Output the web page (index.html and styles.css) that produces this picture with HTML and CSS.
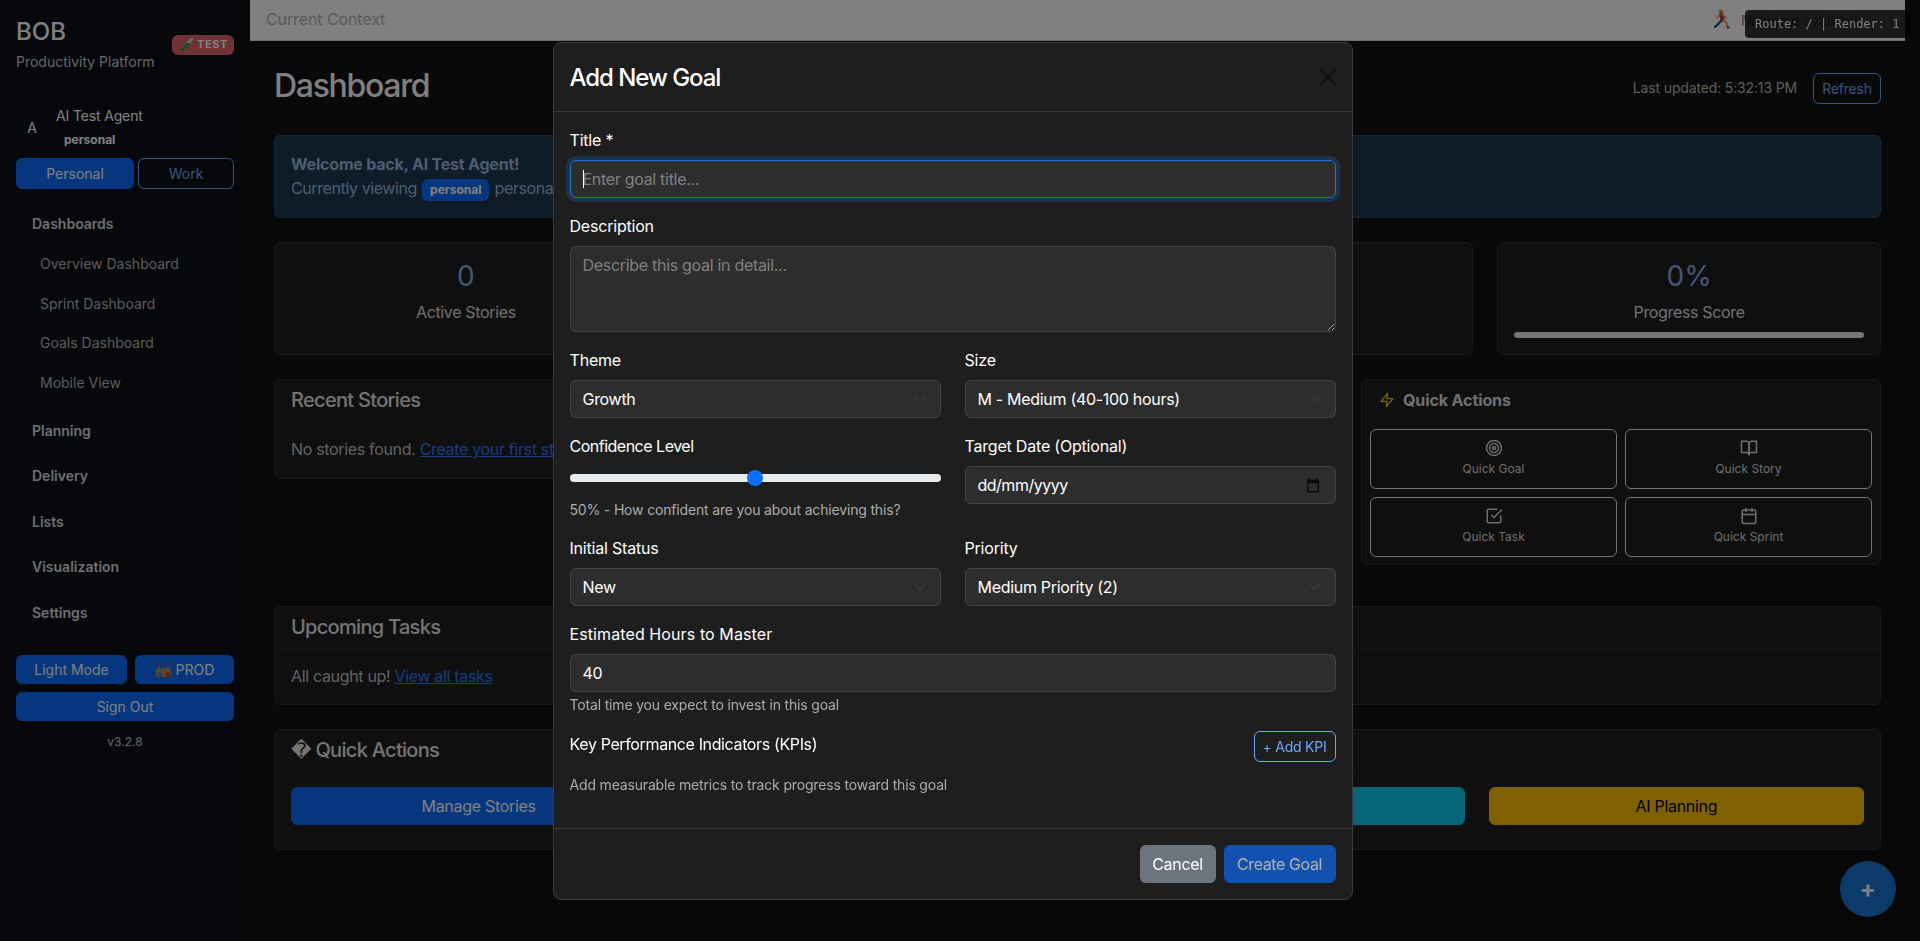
FILE: index.html
```html
<!DOCTYPE html>
<html lang="en">
<head>
<meta charset="utf-8">
<title>BOB - Productivity Platform</title>
<link rel="stylesheet" href="styles.css">
</head>
<body>
<div class="app">
  <aside class="sidebar">
    <div class="brand-row">
      <div class="brand">
        <h1 class="brand-name">BOB</h1>
        <div class="brand-sub">Productivity Platform</div>
      </div>
      <span class="test-badge">
        <svg class="emoji-tube" viewBox="0 0 14 14" aria-hidden="true"><path d="M11.5 1.2 2.4 11.4" stroke="#cfd8d8" stroke-width="3" stroke-linecap="round"/><path d="M8 6 2.4 11.6" stroke="#1f9a3a" stroke-width="3" stroke-linecap="round"/></svg>
        TEST
      </span>
    </div>
    <div class="user">
      <div class="avatar">A</div>
      <div class="user-info">
        <div class="user-name">AI Test Agent</div>
        <div class="user-tag">personal</div>
      </div>
    </div>
    <div class="persona-switch">
      <button class="btn btn-primary btn-persona">Personal</button>
      <button class="btn btn-outline btn-work">Work</button>
    </div>
    <nav class="nav">
      <div class="nav-group nav-group-open">Dashboards</div>
      <a class="nav-item">Overview Dashboard</a>
      <a class="nav-item">Sprint Dashboard</a>
      <a class="nav-item">Goals Dashboard</a>
      <a class="nav-item nav-item-last">Mobile View</a>
      <div class="nav-group">Planning</div>
      <div class="nav-group">Delivery</div>
      <div class="nav-group">Lists</div>
      <div class="nav-group">Visualization</div>
      <div class="nav-group">Settings</div>
    </nav>
    <div class="side-foot">
      <div class="side-foot-row">
        <button class="btn btn-primary btn-side btn-light-mode">Light Mode</button>
        <button class="btn btn-primary btn-side btn-prod">
          <svg class="emoji-factory" viewBox="0 0 18 18" aria-hidden="true"><rect x="3.5" y="1" width="1.6" height="5" fill="#c9485b"/><rect x="8.2" y="1" width="1.6" height="5" fill="#c9485b"/><rect x="12.9" y="1" width="1.6" height="5" fill="#c9485b"/><path d="M1 17V9l4-3 1 3 3-3 1 3 3-3 4 3v8z" fill="#b08d68"/><rect x="3" y="12" width="4" height="5" fill="#6d7a88"/><rect x="12" y="12" width="4" height="5" fill="#d92a2a"/></svg>
          PROD
        </button>
      </div>
      <button class="btn btn-primary btn-side btn-signout">Sign Out</button>
      <div class="version">v3.2.8</div>
    </div>
  </aside>

  <div class="main">
    <header class="topbar">
      <span class="topbar-title">Current Context</span>
      <div class="topbar-right">
        <svg class="emoji-runner" viewBox="0 0 16 20" aria-hidden="true"><circle cx="7" cy="2.6" r="2.2" fill="#d99a3c"/><path d="M7 5.4l1.6 5" stroke="#c2304f" stroke-width="4" stroke-linecap="round"/><path d="M6.3 5.4 3 8.5M8.5 5.6l3.6 3.4" stroke="#d99a3c" stroke-width="1.5" stroke-linecap="round"/><path d="M8 11l-3 3.3L1.5 17.5" stroke="#2a3c9c" stroke-width="2.2" fill="none" stroke-linecap="round"/><path d="M9 11l3.4 2.5.8 4" stroke="#d99a3c" stroke-width="1.7" fill="none" stroke-linecap="round"/><path d="M.4 18.5 2 17.4M13 18.6l2.2-.2" stroke="#222" stroke-width="1.6"/></svg>
        <span class="topbar-note">Navigate available</span>
      </div>
    </header>

    <main class="content">
      <div class="page-head">
        <h2 class="page-title">Dashboard</h2>
        <div class="page-actions">
          <span class="updated">Last updated: 5:32:13 PM</span>
          <button class="btn btn-outline btn-refresh">Refresh</button>
        </div>
      </div>

      <div class="welcome">
        <div class="welcome-title">Welcome back, AI Test Agent!</div>
        <div class="welcome-text">Currently viewing <span class="welcome-badge">personal</span> personal workspace.</div>
      </div>

      <div class="stats">
        <div class="card stat"><div class="stat-value">0</div><div class="stat-label">Active Stories</div></div>
        <div class="card stat"><div class="stat-value">0</div><div class="stat-label">Goals</div></div>
        <div class="card stat"><div class="stat-value">0</div><div class="stat-label">Upcoming Tasks</div></div>
        <div class="card stat"><div class="stat-value">0%</div><div class="stat-label">Progress Score</div><div class="progress"></div></div>
      </div>

      <div class="split">
        <section class="card recent">
          <h3 class="card-head">Recent Stories</h3>
          <div class="card-body">No stories found. <a class="link">Create your first story</a></div>
        </section>
        <section class="card quick">
          <h3 class="quick-head">
            <svg class="quick-bolt" viewBox="0 0 24 24" aria-hidden="true"><polygon points="13 2 3 14 12 14 11 22 21 10 12 10 13 2"/></svg>
            Quick Actions
          </h3>
          <div class="quick-grid">
            <button class="quick-btn">
              <svg class="icon" viewBox="0 0 24 24" aria-hidden="true"><circle cx="12" cy="12" r="10"/><circle cx="12" cy="12" r="6"/><circle cx="12" cy="12" r="2"/></svg>
              Quick Goal
            </button>
            <button class="quick-btn">
              <svg class="icon" viewBox="0 0 24 24" aria-hidden="true"><path d="M2 3h6a4 4 0 0 1 4 4v14a3 3 0 0 0-3-3H2z"/><path d="M22 3h-6a4 4 0 0 0-4 4v14a3 3 0 0 1 3-3h7z"/></svg>
              Quick Story
            </button>
            <button class="quick-btn">
              <svg class="icon" viewBox="0 0 24 24" aria-hidden="true"><polyline points="9 11 12 14 22 4"/><path d="M21 12v7a2 2 0 0 1-2 2H5a2 2 0 0 1-2-2V5a2 2 0 0 1 2-2h11"/></svg>
              Quick Task
            </button>
            <button class="quick-btn">
              <svg class="icon" viewBox="0 0 24 24" aria-hidden="true"><rect x="3" y="4" width="18" height="18" rx="2"/><line x1="16" y1="2" x2="16" y2="6"/><line x1="8" y1="2" x2="8" y2="6"/><line x1="3" y1="10" x2="21" y2="10"/></svg>
              Quick Sprint
            </button>
          </div>
        </section>
      </div>

      <section class="card upcoming">
        <h3 class="card-head">Upcoming Tasks</h3>
        <div class="card-body">All caught up! <a class="link">View all tasks</a></div>
      </section>

      <section class="card actions">
        <h3 class="card-head"><span class="replacement">�</span> Quick Actions</h3>
        <div class="card-body actions-grid">
          <button class="btn action btn-primary">Manage Stories</button>
          <button class="btn action btn-primary">Manage Goals</button>
          <button class="btn action btn-info">Kanban Board</button>
          <button class="btn action btn-warning">AI Planning</button>
        </div>
      </section>
    </main>
  </div>
</div>

<button class="fab">+</button>
<div class="debug">Route: / | Render: 1</div>

<div class="backdrop"></div>

<div class="modal-layer">
  <div class="modal">
    <div class="modal-head">
      <h4 class="modal-title">Add New Goal</h4>
      <svg class="modal-close" viewBox="0 0 16 16" aria-hidden="true"><path d="M1 1l14 14M15 1 1 15"/></svg>
    </div>
    <div class="modal-body">
      <div class="field">
        <label class="label">Title *</label>
        <div class="caret-wrap">
          <input class="control control-focus" type="text" placeholder="Enter goal title...">
        </div>
      </div>
      <div class="field">
        <label class="label">Description</label>
        <textarea class="control control-area" placeholder="Describe this goal in detail..."></textarea>
      </div>
      <div class="two">
        <div class="field">
          <label class="label">Theme</label>
          <select class="control control-select"><option>Growth</option></select>
        </div>
        <div class="field">
          <label class="label">Size</label>
          <select class="control control-select"><option>M - Medium (40-100 hours)</option></select>
        </div>
        <div class="field">
          <label class="label label-tight">Confidence Level</label>
          <input class="range" type="range" min="0" max="100" value="50">
          <div class="hint hint-range">50% - How confident are you about achieving this?</div>
        </div>
        <div class="field">
          <label class="label">Target Date (Optional)</label>
          <div class="control control-date">
            <span>dd/mm/yyyy</span>
            <svg class="date-icon" viewBox="0 0 14 16" aria-hidden="true"><path d="M3 1v2M11 1v2" stroke="#0c0c0c" stroke-width="1.6"/><rect x="1.7" y="3.2" width="10.6" height="11.6" rx="1" fill="none" stroke="#0c0c0c" stroke-width="1.4"/><rect x="1.7" y="3.2" width="10.6" height="3.2" fill="#0c0c0c"/></svg>
          </div>
        </div>
        <div class="field">
          <label class="label">Initial Status</label>
          <select class="control control-select"><option>New</option></select>
        </div>
        <div class="field">
          <label class="label">Priority</label>
          <select class="control control-select"><option>Medium Priority (2)</option></select>
        </div>
      </div>
      <div class="field">
        <label class="label label-hours">Estimated Hours to Master</label>
        <input class="control" type="text" value="40">
        <div class="hint hint-hours">Total time you expect to invest in this goal</div>
      </div>
      <div class="field">
        <div class="kpi-head">
          <label class="label label-kpi">Key Performance Indicators (KPIs)</label>
          <button class="btn btn-kpi">+ Add KPI</button>
        </div>
        <div class="hint hint-kpi">Add measurable metrics to track progress toward this goal</div>
      </div>
    </div>
    <div class="modal-foot">
      <button class="btn btn-cancel">Cancel</button>
      <button class="btn btn-create" disabled>Create Goal</button>
    </div>
  </div>
</div>
</body>
</html>
```

FILE: styles.css
```css
* { box-sizing: border-box; }

html, body {
  margin: 0;
  height: 100%;
  overflow: hidden;
}

body {
  background: #121212;
  color: #e0e0e0;
  font-family: Inter, "Noto Sans", "Liberation Sans", sans-serif;
  font-size: 16px;
  line-height: 1.5;
}

h1, h2, h3, h4 { margin: 0; font-weight: 500; }

.app {
  display: flex;
  width: 1905px;
  min-height: 941px;
}

/* Buttons */
.btn {
  display: inline-flex;
  align-items: center;
  justify-content: center;
  border: 1px solid transparent;
  border-radius: 6px;
  font-family: inherit;
  font-size: 14px;
  line-height: 1.5;
  padding: 4px 8px;
  color: #fff;
  background: none;
}
.btn-primary { background: #0d6efd; border-color: #0d6efd; color: #fff; }
.btn-outline { color: #6ea8fe; border-color: #6ea8fe; }
.btn-info { background: #0dcaf0; border-color: #0dcaf0; color: #000; }
.btn-warning { background: #ffc107; border-color: #ffc107; color: #000; }

/* Sidebar */
.sidebar {
  flex: 0 0 250px;
  width: 250px;
  min-height: 941px;
  background: #0d1117;
  padding: 16px;
}
.brand-row {
  display: flex;
  align-items: center;
  justify-content: space-between;
  height: 57px;
}
.brand { align-self: flex-start; padding-top: 1px; }
.brand-name {
  font-size: 24px;
  line-height: 29px;
  color: #fff;
}
.brand-sub {
  margin-top: 5px;
  font-size: 14px;
  line-height: 21px;
  color: #ccc;
}
.test-badge {
  display: inline-flex;
  align-items: center;
  gap: 3px;
  width: 62px;
  height: 20px;
  padding: 0 6px 0 8px;
  border-radius: 6px;
  background: #e0646c;
  color: #fff;
  font-size: 11px;
  font-weight: 700;
  letter-spacing: .6px;
}
.emoji-tube { width: 14px; height: 14px; flex: none; }

.user {
  display: flex;
  align-items: flex-start;
  margin-top: 32px;
}
.avatar {
  flex: 0 0 32px;
  height: 45px;
  display: flex;
  align-items: center;
  justify-content: center;
  font-size: 14px;
  color: #fff;
  margin-right: 8px;
}
.user-name {
  font-size: 14px;
  line-height: 21px;
  color: #fff;
  letter-spacing: -.15px;
}
.user-tag {
  width: fit-content;
  margin-top: 4px;
  padding: 0 8px;
  font-size: 12px;
  line-height: 20px;
  font-weight: 700;
  color: #fff;
}
.persona-switch {
  display: flex;
  gap: 4px;
  margin-top: 8px;
}
.btn-persona { flex: 0 0 118px; height: 31px; }
.btn-work { flex: 0 0 96px; height: 31px; }

.nav { margin-top: 13px; }
.nav-group {
  display: flex;
  align-items: center;
  height: 45.5px;
  padding-left: 16px;
  font-size: 14px;
  font-weight: 600;
  color: #ddd;
}
.nav-group-open { height: 42px; }
.nav-item {
  display: flex;
  align-items: center;
  height: 39.6px;
  padding-left: 24px;
  font-size: 14px;
  color: #b8b8b8;
}
.nav-item-last { margin-bottom: 5px; }

.side-foot { margin-top: 20px; }
.side-foot-row { display: flex; gap: 8px; margin-bottom: 8px; }
.btn-side { height: 29px; padding: 0 4px; }
.btn-light-mode { flex: 0 0 111px; }
.btn-prod { flex: 0 0 99px; gap: 4px; }
.btn-signout { width: 100%; }
.emoji-factory { width: 17px; height: 17px; }
.version {
  margin-top: 12px;
  font-size: 12px;
  line-height: 18px;
  text-align: center;
  color: #ccc;
}

/* Main */
.main { flex: 1; min-width: 0; }
.topbar {
  display: flex;
  align-items: center;
  justify-content: space-between;
  height: 41px;
  padding: 0 16px;
  background: #fff;
  border-bottom: 1px solid #ddd;
}
.topbar-title { color: #b5b5b5; line-height: 36px; height: 38px; letter-spacing: -.1px; }
.topbar-right { display: flex; align-items: center; gap: 11px; width: 175px; }
.emoji-runner { width: 16px; height: 20px; flex: none; margin-top: -2px; }
.topbar-note { color: #888; white-space: nowrap; font-size: 14px; }

.content { padding: 25px 24px 0; }
.page-head {
  display: flex;
  justify-content: space-between;
  align-items: flex-start;
  height: 38px;
  margin-bottom: 31px;
}
.page-title {
  font-size: 32px;
  line-height: 38px;
  padding-top: 1px;
  letter-spacing: -1.3px;
  color: #fff;
}
.page-actions {
  display: flex;
  align-items: center;
  gap: 16px;
  margin-top: 7px;
}
.updated { font-size: 14px; color: #bbb; margin-bottom: 3px; letter-spacing: -.15px; }
.btn-refresh { height: 31px; width: 68px; padding: 0; letter-spacing: -.2px; }

.welcome {
  height: 83px;
  padding: 16px;
  margin-bottom: 24px;
  background: #1c3850;
  border: 1px solid #2a4a70;
  border-radius: 6px;
  color: #9ab8e0;
}
.welcome-title { font-weight: 700; letter-spacing: -.2px; }
.welcome-text { letter-spacing: -.4px; }
.welcome-badge {
  display: inline-block;
  padding: 4px 8px;
  margin: 0 1px;
  border-radius: 6px;
  background: #0d6efd;
  color: #fff;
  font-size: 12px;
  font-weight: 700;
  line-height: 14px;
  letter-spacing: 0;
  vertical-align: baseline;
}

.card {
  background: #1e1e1e;
  border: 1px solid #333;
  border-radius: 6px;
}
.stats {
  display: grid;
  grid-template-columns: repeat(4, 1fr);
  gap: 24px;
  margin-bottom: 24px;
}
.stat {
  height: 113px;
  padding: 16px;
  text-align: center;
}
.stat-value {
  font-size: 28px;
  line-height: 34px;
  margin-bottom: 7px;
  color: #88ace8;
  font-weight: 400;
}
.stat-label { line-height: 24px; color: #e0e0e0; letter-spacing: -.35px; }
.progress {
  height: 6px;
  margin-top: 8px;
  border-radius: 6px;
  background: #e9ecef;
}

.split {
  display: grid;
  grid-template-columns: 1fr 520px;
  gap: 24px;
  align-items: start;
  margin-bottom: 41px;
}
.card-head {
  height: 42px;
  padding: 8px 16px;
  font-size: 20px;
  line-height: 24px;
  letter-spacing: -.7px;
  color: #e8e8e8;
  border-bottom: 1px solid #2b2b2b;
}
.card-body { padding: 15px 16px 17px; color: #c4c4c4; letter-spacing: -.33px; }
.link { color: #2c7bff; text-decoration: underline; }

.quick { height: 186px; padding: 0 8px 8px; }
.quick-head {
  display: flex;
  align-items: flex-start;
  gap: 8px;
  height: 49px;
  padding: 8px 0 0 9px;
  font-size: 16px;
  line-height: 24px;
  font-weight: 700;
  letter-spacing: -.1px;
  color: #e0e0e0;
}
.quick-bolt {
  width: 16px;
  height: 16px;
  margin-top: 4px;
  fill: none;
  stroke: #ffc107;
  stroke-width: 2;
  stroke-linecap: round;
  stroke-linejoin: round;
}
.quick-grid {
  display: grid;
  grid-template-columns: 1fr 1fr;
  grid-auto-rows: 60px;
  gap: 8px;
}
.quick-btn {
  display: flex;
  flex-direction: column;
  align-items: center;
  justify-content: center;
  gap: 3px;
  border: 1px solid #ededed;
  border-radius: 6px;
  background: none;
  font-family: inherit;
  font-size: 12px;
  line-height: 18px;
  color: #ddd;
  padding: 0 0 2px;
}
.icon {
  width: 18px;
  height: 18px;
  fill: none;
  stroke: #ddd;
  stroke-width: 2;
  stroke-linecap: round;
  stroke-linejoin: round;
}

.upcoming { height: 99px; margin-bottom: 24px; }
.actions { height: 121px; }
.replacement { font-family: "DejaVu Sans", sans-serif; }
.actions-grid {
  display: grid;
  grid-template-columns: repeat(4, 1fr);
  gap: 24px;
}
.action { height: 38px; font-size: 16px; padding: 0; letter-spacing: -.3px; }

.fab {
  position: fixed;
  left: 1840px;
  top: 861px;
  width: 56px;
  height: 56px;
  border: 0;
  border-radius: 50%;
  background: #1976d2;
  color: #fff;
  font-family: inherit;
  font-size: 24px;
  font-weight: 700;
  line-height: 56px;
  padding: 0;
  box-shadow: 0 4px 12px rgba(0, 0, 0, .3);
}

.debug {
  position: fixed;
  left: 1745px;
  top: 10px;
  width: 165px;
  height: 28px;
  padding: 0 10px;
  border-radius: 4px;
  background: rgba(0, 0, 0, .8);
  color: #fff;
  font-family: "DejaVu Sans Mono", "Liberation Mono", monospace;
  font-size: 12px;
  line-height: 28px;
  white-space: nowrap;
}

.backdrop {
  position: fixed;
  inset: 0;
  background: rgba(0, 0, 0, .5);
}

/* Modal */
.modal-layer {
  position: fixed;
  inset: 0 15px 0 0;
  display: flex;
  justify-content: center;
  align-items: flex-start;
  padding-top: 42px;
}
.modal {
  width: 800px;
  height: 858px;
  background: #1e1e1e;
  border: 1px solid #3a3a3a;
  border-radius: 8px;
  color: #fff;
  display: flex;
  flex-direction: column;
}
.modal-head {
  flex: none;
  display: flex;
  align-items: center;
  justify-content: space-between;
  height: 69px;
  padding: 16px;
  border-bottom: 1px solid #383838;
}
.modal-title {
  font-size: 24px;
  line-height: 36px;
  letter-spacing: -1.05px;
  padding-top: 2px;
  color: #fff;
}
.modal-close {
  width: 16px;
  height: 16px;
  fill: none;
  stroke: #0e0e0e;
  stroke-width: 1.7;
}
.modal-body { flex: 1; padding: 16px; }
.field { margin-bottom: 16px; }
.label { display: block; margin-bottom: 8px; line-height: 24px; color: #fff; letter-spacing: -.2px; }
.label-hours { letter-spacing: .1px; }
.label-tight { letter-spacing: -.5px; }
.control {
  display: block;
  width: 100%;
  height: 38px;
  padding: 6px 12px;
  background-color: #2d2d2d;
  border: 1px solid #444;
  border-radius: 6px;
  color: #fff;
  font-family: inherit;
  font-size: 16px;
  line-height: 24px;
  letter-spacing: -.3px;
  outline: 0;
}
.control::placeholder { color: #808080; opacity: 1; }
.control-focus {
  border-color: #1976d2;
  box-shadow: 0 0 0 4px rgba(25, 118, 210, .25);
}
.caret-wrap { position: relative; }
.caret-wrap::after {
  content: "";
  position: absolute;
  left: 13px;
  top: 10px;
  width: 1px;
  height: 18px;
  background: #fff;
}
.control-area { height: 86px; resize: vertical; }
.control-select {
  appearance: none;
  -webkit-appearance: none;
  padding-right: 36px;
  background-image: url("data:image/svg+xml,%3csvg xmlns='http://www.w3.org/2000/svg' viewBox='0 0 16 16'%3e%3cpath fill='none' stroke='%23343a40' stroke-linecap='round' stroke-linejoin='round' stroke-width='2' d='m2 5 6 6 6-6'/%3e%3c/svg%3e");
  background-repeat: no-repeat;
  background-position: right 12px center;
  background-size: 16px 12px;
}
.control-date {
  display: flex;
  align-items: center;
  justify-content: space-between;
  padding-right: 15px;
  letter-spacing: -.5px;
}
.date-icon { width: 14px; height: 16px; }
.two {
  display: grid;
  grid-template-columns: 1fr 1fr;
  column-gap: 24px;
}
.two .field { min-width: 0; }
.range {
  -webkit-appearance: none;
  appearance: none;
  display: block;
  width: 100%;
  height: 24px;
  margin: 0;
  background: transparent;
}
.range::-webkit-slider-runnable-track {
  height: 8px;
  border-radius: 8px;
  background: #e9ecef;
}
.range::-webkit-slider-thumb {
  -webkit-appearance: none;
  width: 16px;
  height: 16px;
  margin-top: -4px;
  border-radius: 50%;
  background: #0d6efd;
}
.hint { font-size: 14px; line-height: 21px; color: #adadad; letter-spacing: -.17px; }
.hint-range { margin-top: 9px; height: 21px; }
.hint-hours { margin-top: 2px; }
.kpi-head {
  display: flex;
  justify-content: space-between;
  align-items: flex-start;
  height: 31px;
  margin-bottom: 12px;
}
.label-kpi { margin: 0; padding-top: 1px; letter-spacing: -.37px; }
.btn-kpi {
  width: 82px;
  height: 31px;
  padding: 0;
  border-color: #6ea8fe;
  color: #6ea8fe;
  letter-spacing: -.2px;
}
.modal-foot {
  flex: none;
  display: flex;
  justify-content: flex-end;
  gap: 8px;
  height: 71px;
  padding: 16px;
  border-top: 1px solid #383838;
}
.btn-cancel, .btn-create { height: 38px; font-size: 16px; padding: 0; }
.btn-cancel { width: 76px; background: #6c757d; color: #fff; letter-spacing: -.3px; }
.btn-create {
  width: 112px;
  background: #0d6efd;
  color: #fff;
  opacity: .65;
  letter-spacing: -.4px;
}
```
